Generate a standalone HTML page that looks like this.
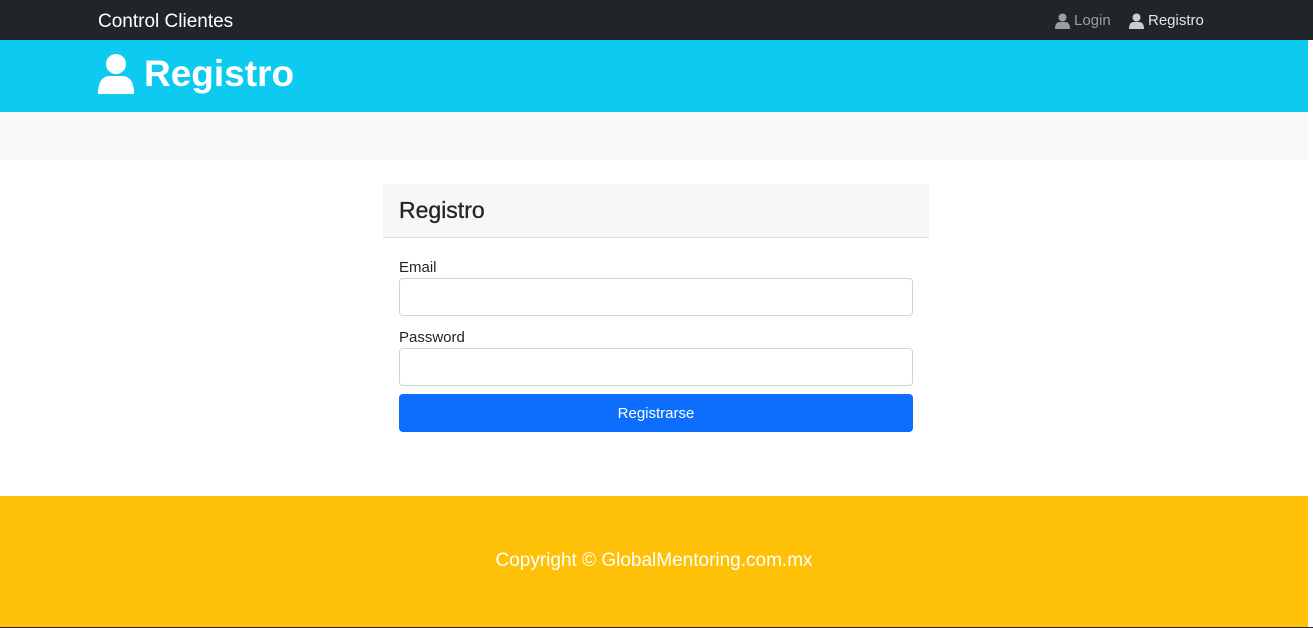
<!DOCTYPE html>
<html><head><style>
*{box-sizing:border-box;margin:0;padding:0}
body{width:1313px;height:628px;overflow:hidden;font-family:"Liberation Sans",sans-serif;background:#fff;position:relative}
.nav{position:absolute;top:0;left:0;width:1313px;height:40px;background:#212529}
.brand{position:absolute;left:98px;top:11px;color:#fff;font-size:19px}
.nl{position:absolute;top:12px;font-size:15px;display:flex;align-items:center;gap:4px}
.hdr{position:absolute;top:40px;left:0;width:1308px;height:72px;background:#0dcaf0}
.hdr h1{position:absolute;left:98px;top:13px;color:#fff;font-size:37px;font-weight:bold;display:flex;align-items:center;gap:10px}
.gray{position:absolute;top:112px;left:0;width:1308px;height:48px;background:#f8f9fa}
.card{position:absolute;left:383px;top:184px;width:546px}
.ch{height:54px;background:#f7f7f7;border-bottom:1px solid #dcdcdc;padding:13px 16px;font-size:23px;color:#212529;-webkit-text-stroke:0.3px #212529}
label{position:absolute;left:16px;font-size:15px;color:#212529}
.in{position:absolute;left:16px;width:514px;height:38px;border:1px solid #ced4da;border-radius:4px}
.btn{position:absolute;left:16px;top:210px;width:514px;height:38px;background:#0d6efd;border-radius:4px;color:#fff;font-size:15px;text-align:center;line-height:40px}
.foot{position:absolute;top:496px;left:0;width:1308px;height:131px;background:#ffc107;color:#fff;font-size:19px;text-align:center;line-height:130px}
.bot{position:absolute;top:627px;left:0;width:1313px;height:1px;background:#212529}
</style></head><body>
<div class="nav">
<div class="brand">Control Clientes</div>
<div class="nl" style="left:1055px;color:#9a9d9f"><svg width="15" height="16" viewBox="0 0 15 16"><circle cx="7.5" cy="4.5" r="4" fill="#9a9d9f"/><path d="M0 16 Q0 9 5 9 H10 Q15 9 15 16Z" fill="#9a9d9f"/></svg>Login</div>
<div class="nl" style="left:1129px;color:#e5e5e5"><svg width="15" height="16" viewBox="0 0 15 16"><circle cx="7.5" cy="4.5" r="4" fill="#ccc"/><path d="M0 16 Q0 9 5 9 H10 Q15 9 15 16Z" fill="#ccc"/></svg>Registro</div>
</div>
<div class="hdr"><h1><svg width="36" height="40" viewBox="0 0 36 40"><circle cx="18" cy="10" r="10" fill="#fff"/><path d="M0 40 Q0 22 12 22 H24 Q36 22 36 40Z" fill="#fff"/></svg>Registro</h1></div>
<div class="gray"></div>
<div class="card">
<div class="ch">Registro</div>
<label style="top:75px">Email</label>
<div class="in" style="top:94px"></div>
<label style="top:145px">Password</label>
<div class="in" style="top:164px"></div>
<div class="btn">Registrarse</div>
</div>
<div class="foot">Copyright © GlobalMentoring.com.mx</div>
<div class="bot"></div>
</body></html>
